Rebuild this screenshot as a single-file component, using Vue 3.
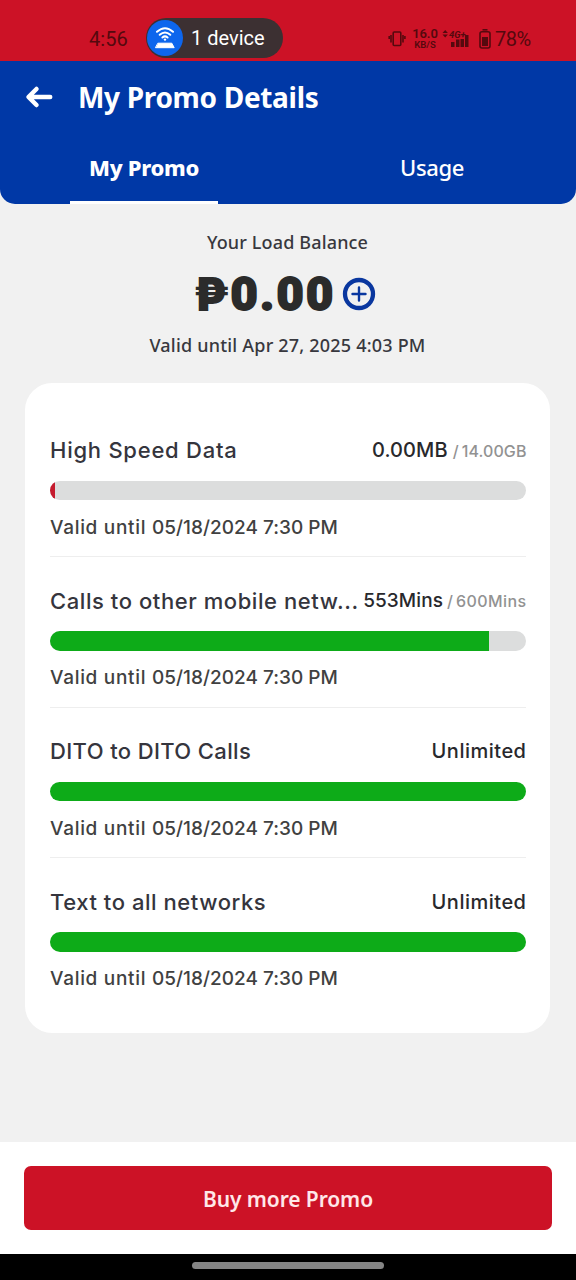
<script setup>
const plans = [
  { name: 'High Speed Data', used: '0.00MB', total: '14.00GB', percent: 1.1, tone: 'low', key: 'data' },
  { name: 'Calls to other mobile netw...', used: '553Mins', total: '600Mins', percent: 92.2, tone: 'ok', key: 'calls' },
  { name: 'DITO to DITO Calls', used: 'Unlimited', percent: 100, tone: 'ok', key: 'dito' },
  { name: 'Text to all networks', used: 'Unlimited', percent: 100, tone: 'ok', key: 'text' },
]
</script>

<template>
  <div class="screen">
    <div class="status">
      <span class="time">4:56</span>
      <div class="hotspot">
        <span class="hotspot-icon">
          <svg width="24" height="24" viewBox="0 0 24 24" fill="none" stroke="#fff" stroke-width="2" stroke-linecap="round">
            <path d="M4 5.800Q12-1.200 20 5.800" />
            <path d="M6.700 8.800Q12 4.200 17.300 8.800" />
            <path d="M9.400 11.500Q12 9.300 14.600 11.500" />
            <circle cx="12" cy="13.600" r="1.200" fill="#fff" stroke="none" />
            <path d="M5.200 17.200h13.600l2.400 4.500H2.800z" fill="#fff" stroke-width="1" stroke-linejoin="round" />
          </svg>
        </span>
        <span class="hotspot-label">1 device</span>
      </div>
      <div class="indicators">
        <svg class="vibrate" width="18" height="18" viewBox="0 0 18 18" fill="none" stroke="currentColor" stroke-width="1.600">
          <rect x="5.200" y="2" width="7.600" height="13.500" rx="1" />
          <path d="M3 5v7.500M15 5v7.500M1.200 6v3M16.900 6v3" />
        </svg>
        <div class="speed"><span class="rate">16.0</span><span class="unit">KB/S</span></div>
        <svg class="signal" width="28" height="20" viewBox="0 0 28 20" fill="currentColor">
          <path d="M.5 4L3.200 1 5.900 4zM.5 5.600L3.200 8.600 5.900 5.600z" />
          <text x="7" y="8.500" class="network">4G+</text>
          <path d="M9 13h3.500v5H9zM14 10.500h3.500V18H14zM18.500 10h3.500v8h-3.500zM23 6h3.500v12H23z" />
        </svg>
        <svg class="battery" width="12" height="20" viewBox="0 0 12 20" fill="none" stroke="currentColor" stroke-width="1.600">
          <path d="M3.500 .8h5" />
          <rect x="1" y="2.700" width="10" height="16.300" rx="2" />
          <path d="M3 8h6v9H3z" fill="currentColor" stroke="none" />
        </svg>
        <span class="percent">78%</span>
      </div>
    </div>

    <header class="header">
      <div class="title-row">
        <svg width="28" height="24" viewBox="0 0 28 24" fill="none" stroke="#fff" stroke-width="4.500" stroke-linecap="round" stroke-linejoin="round">
          <path d="M25.200 12H4M11.500 4L3.500 12l8 8" />
        </svg>
        <h1>My Promo Details</h1>
      </div>
      <nav class="tabs">
        <div class="tab active"><span>My Promo</span></div>
        <div class="tab"><span>Usage</span></div>
      </nav>
    </header>

    <main class="content">
      <section class="balance">
        <div class="caption">Your Load Balance</div>
        <div class="amount">
          <span class="peso">₱</span><span class="value">0.00</span>
          <svg width="34" height="34" viewBox="0 0 34 34" fill="none" stroke="#0a379f">
            <circle cx="17" cy="17" r="14" stroke-width="4.300" />
            <path d="M17 10.500v13M10.500 17h13" stroke-width="2.400" stroke-linecap="round" />
          </svg>
        </div>
        <div class="expiry">Valid until Apr 27, 2025 4:03 PM</div>
      </section>

      <section class="card">
        <article v-for="plan in plans" :key="plan.key" class="plan" :class="plan.key">
          <div class="plan-head">
            <span class="name">{{ plan.name }}</span>
            <span class="quota"><span class="used">{{ plan.used }}</span><template v-if="plan.total"><span class="slash">/</span><span class="total">{{ plan.total }}</span></template></span>
          </div>
          <div class="bar"><div class="fill" :class="plan.tone" :style="{ width: plan.percent + '%' }"></div></div>
          <div class="valid"><span class="until">Valid until </span>05/18/2024 7:30 PM</div>
        </article>
      </section>
    </main>

    <footer class="footer"><button class="buy"><span>Buy more Promo</span></button></footer>
    <div class="gesture"><span></span></div>
  </div>
</template>

<style>
html, body { margin: 0; background: #000; }
</style>

<style scoped>
* { box-sizing: border-box; }
.screen { width: 576px; height: 1280px; display: flex; flex-direction: column; overflow: hidden; background: #f1f1f1; font-family: "Noto Sans", sans-serif; white-space: nowrap; }
.status { height: 61px; flex: none; display: flex; padding-top: 18px; background: #cc1226; color: #55090e; }
.time { width: 39px; margin: 0 17px 0 89px; font: 400 20px/42px Roboto, sans-serif; letter-spacing: .1px; }
.hotspot { width: 137px; height: 40px; display: flex; align-items: center; gap: 8px; margin-left: 1px; padding-left: 1px; border-radius: 20px; background: #3c3032; }
.hotspot-icon { width: 36px; height: 36px; display: grid; place-items: center; border-radius: 50%; background: #0d66ed; }
.hotspot-label { color: #fff; font: 400 20px/41px Roboto, sans-serif; letter-spacing: 0; }
.indicators { display: flex; margin-left: 105px; height: 42px; align-items: center; }
.speed { width: 28px; margin-left: 5px; display: flex; flex-direction: column; align-items: center; font-family: Roboto, sans-serif; font-weight: 600; }
.rate { font-size: 13px; line-height: 12px; letter-spacing: -.1px; }
.unit { font-size: 9.500px; line-height: 10px; }
.signal { margin-left: 3px; }
.network { font: italic 700 9.500px Roboto, sans-serif; }
.battery { margin-left: 9px; }
.percent { margin-left: 4px; font: 400 20px/42px Roboto, sans-serif; letter-spacing: -.5px; }
.header { height: 143px; flex: none; background: #0038a6; color: #fff; border-radius: 0 0 15px 15px; }
.title-row { height: 72px; padding-left: 25px; display: flex; align-items: center; gap: 25px; }
h1 { margin: 0; font-size: 28px; line-height: 36px; font-weight: 700; letter-spacing: -.32px; }
.tabs { display: grid; grid-template-columns: 1fr 1fr; height: 71px; }
.tab { display: flex; align-items: center; justify-content: center; padding-bottom: 3px; font-size: 22px; font-weight: 500; letter-spacing: -.4px; }
.tab.active { width: 148px; margin-left: 70px; font-weight: 800; letter-spacing: -.3px; border-bottom: 3px solid #fff; padding: 0; }
.content { height: 938px; flex: none; padding: 25px 26px 0 25px; background: #f1f1f1; }
.balance { height: 154px; display: flex; flex-direction: column; align-items: center; color: #38383e; }
.caption { font-size: 18px; line-height: 26px; font-weight: 500; letter-spacing: .15px; }
.amount { width: 182px; margin-right: 4px; height: 77px; display: flex; align-items: center; color: #2b2b2b; font: 900 47px/77px Inter, sans-serif; }
.peso { width: 36px; flex: none; margin-left: -1px; }
.value { width: 107px; flex: none; font-family: Roboto, sans-serif; font-size: 47px; letter-spacing: 2.300px; -webkit-text-stroke: 1.800px #2b2b2b; padding-left: 1px; }
.amount svg { margin-left: 5px; flex: none; }
.expiry { font-size: 18px; line-height: 26px; font-weight: 500; letter-spacing: .2px; }
.card { height: 649.500px; padding: 42px 24px 0 25px; border-radius: 27px; background: #fff; font-family: Inter, sans-serif; }
.plan { height: 150.500px; padding-top: 10px; }
.plan:not(:last-child) { background: linear-gradient(#eee, #eee) 0 131px / 100% 1px no-repeat; }
.plan-head { height: 30px; display: flex; justify-content: space-between; align-items: center; }
.name { color: #35353d; font-size: 22px; line-height: 30px; font-weight: 500; letter-spacing: .57px; }
.data .name { letter-spacing: .75px; }
.dito .name { letter-spacing: .37px; }
.text .name { letter-spacing: .55px; }
.quota { display: flex; align-items: baseline; color: #28282c; font-size: 20px; line-height: 28px; font-weight: 500; letter-spacing: .5px; margin-right: -.5px; }
.data .used { letter-spacing: .1px; }
.calls .used { font-size: 19px; letter-spacing: .1px; }
.slash, .total { color: #929292; font-size: 16px; letter-spacing: .1px; }
.calls .total { letter-spacing: .4px; }
.slash { margin: 0 3px 0 5px; }
.calls .slash { margin-left: 4px; }
.bar { height: 19.500px; margin-top: 15.500px; border-radius: 10px; overflow: hidden; background: #dcdddd; }
.fill { height: 100%; }
.fill.ok { background: #0dab18; }
.fill.low { background: #c51b2e; }
.valid { margin-top: 14.600px; color: #414141; font-size: 19px; line-height: 26px; font-weight: 500; letter-spacing: .02px; }
.until { letter-spacing: .7px; }
.footer { height: 112px; flex: none; padding: 24px 24px 0; background: #fff; }
.buy { width: 528px; height: 64px; border: 0; border-radius: 7px; background: #cc1226; color: #ffe7e9; font: 600 21px/64px "Noto Sans", sans-serif; letter-spacing: -.1px; }
.gesture { height: 26px; flex: none; background: #000; display: flex; justify-content: center; padding-top: 8px; }
.gesture span { width: 192px; height: 7px; border-radius: 4px; background: #858585; }
</style>
